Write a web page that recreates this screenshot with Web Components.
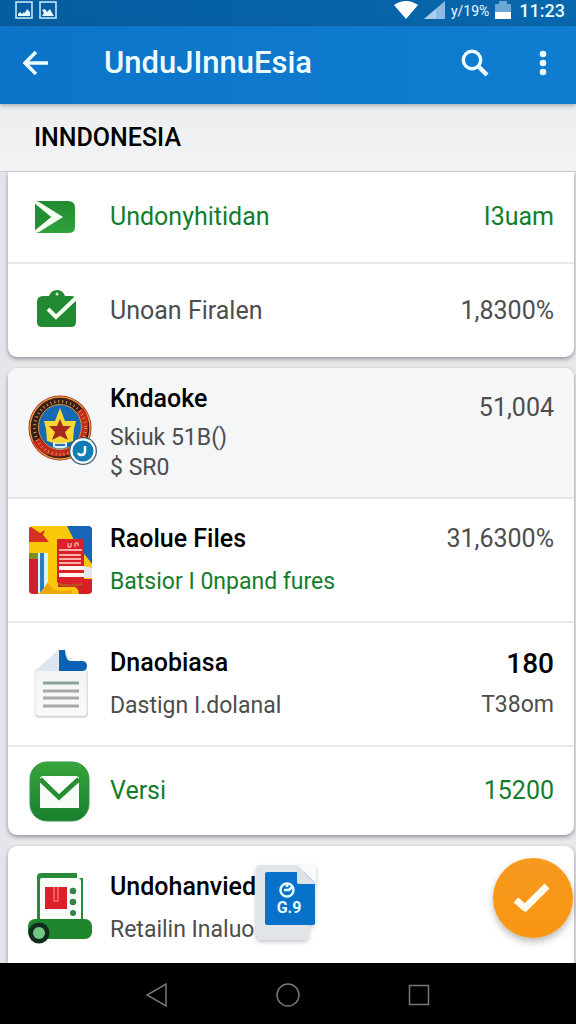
<!DOCTYPE html>
<html lang="id">
<head>
<meta charset="utf-8">
<meta name="viewport" content="width=device-width, initial-scale=1">
<title>Indonesia</title>
<style>
  body { margin: 0; font-family: Roboto, "Noto Sans", sans-serif; color: #000; background: #e6e7ea; }
</style>
</head>
<body>
<app-shell>
  <status-bar slot="top"></status-bar>
  <app-bar slot="top">UnduJInnuEsia</app-bar>
  <section-title>INNDONESIA</section-title>
  <list-card flush>
    <list-row size="small" accent>
      <row-icon slot="icon" name="send"></row-icon>
      <span slot="sub">Undonyhitidan</span><span slot="value">I3uam</span>
    </list-row>
    <list-row size="medium">
      <row-icon slot="icon" name="bag"></row-icon>
      <span slot="sub">Unoan Firalen</span><span slot="value">1,8300%</span>
    </list-row>
  </list-card>
  <list-card>
    <list-row size="tall">
      <row-icon slot="icon" name="emblem"></row-icon>
      <span slot="title">Kndaoke</span><span slot="sub">Skiuk 51B()</span><span slot="sub">$ SR0</span>
      <span slot="value">51,004</span>
    </list-row>
    <list-row size="large" accent-sub>
      <row-icon slot="icon" name="files"></row-icon>
      <span slot="title">Raolue Files</span><span slot="sub">Batsior I 0npand fures</span>
      <span slot="value">31,6300%</span>
    </list-row>
    <list-row size="large">
      <row-icon slot="icon" name="document"></row-icon>
      <span slot="title">Dnaobiasa</span><span slot="sub">Dastign I.dolanal</span>
      <span slot="strong">180</span><span slot="value" class="note">T38om</span>
    </list-row>
    <list-row size="small" accent>
      <row-icon slot="icon" name="mail"></row-icon>
      <span slot="sub">Versi</span><span slot="value">15200</span>
    </list-row>
  </list-card>
  <list-card open>
    <list-row size="large">
      <row-icon slot="icon" name="server"></row-icon>
      <span slot="title">Undohanvied</span><span slot="sub">Retailin Inaluoi</span>
      <file-badge slot="overlay">G.9</file-badge>
    </list-row>
  </list-card>
  <action-button slot="action"></action-button>
  <nav-bar slot="bottom"></nav-bar>
</app-shell>

<script>
const define = (name, html) => {
  const template = document.createElement('template');
  template.innerHTML = html;
  customElements.define(name, class extends HTMLElement {
    constructor() {
      super();
      this.attachShadow({ mode: 'open' }).append(template.content.cloneNode(true));
    }
  });
};
const buttonReset = 'button{appearance:none;border:0;margin:0;padding:0;background:none;color:inherit;cursor:pointer;display:grid;place-items:center}svg{display:block}';

define('app-shell', `<style>
  :host{display:flex;flex-direction:column;height:100vh}
  .view{flex:1;min-height:0;position:relative;display:flex;flex-direction:column}
  main{flex:1;min-height:0;overflow:hidden auto;scrollbar-width:none;background:linear-gradient(90deg,#e3e5ea,#e7e8ea 12px)}
  .action{position:absolute;right:3px;bottom:25px}
  </style><slot name="top"></slot>
  <div class="view"><main><slot></slot></main><div class="action"><slot name="action"></slot></div></div>
  <slot name="bottom"></slot>`);

define('status-bar', `<style>
  :host{display:flex;align-items:center;justify-content:space-between;height:26px;padding:0 11px 4px 15px;box-sizing:border-box;background:linear-gradient(90deg,#065d9f,#0767ad);color:#e8fbff}
  div{display:flex;align-items:center}
  .left{gap:6px}.right{gap:6px}
  .pct{font-size:14px;line-height:22px}.time{font-size:18px;line-height:22px;font-weight:500;margin-left:2px}
  svg{display:block}
  </style>
  <div class="left">
    <svg width="18" height="20" viewBox="0 0 18 20"><path d="M1 1h16v16H1z" fill="none" stroke="#cdeeff" stroke-width="1.5"/><path d="M3 15v-2l2-2 2 2 2-2 1 1 2-4 3 3v4z" fill="#e8fbff"/></svg>
    <svg width="18" height="20" viewBox="0 0 18 20"><path d="M1 1h16v16H1z" fill="none" stroke="#cdeeff" stroke-width="1.5"/><path d="M3 15l2-3-2-3 3-1 2 3 3-3 2 4 2 3z" fill="#e8fbff"/></svg>
  </div>
  <div class="right">
    <svg width="24" height="20" viewBox="0 0 24 20"><path d="M0 4Q12-4 24 4L12 18z" fill="#fff"/></svg>
    <svg width="21" height="20" viewBox="0 0 21 20"><path d="M0 18L21 0v18z" fill="#8bbbe0"/><path d="M0 18L12 8v10z" fill="#a8cfeb"/></svg>
    <span class="pct">y/19%</span>
    <svg width="16" height="20" viewBox="0 0 16 20"><path d="M4 0h8v3h4v8H0V3h4z" fill="#6ba7d4"/><path d="M0 11h16v7H0z" fill="#fff"/></svg>
    <span class="time">11:23</span>
  </div>`);

define('app-bar', `<style>${buttonReset}
  :host{display:flex;align-items:center;height:78px;padding:0 16px 4px;box-sizing:border-box;background:linear-gradient(90deg,#0b74c8,#107dd1);color:#eefcff;position:relative;z-index:1;box-shadow:0 1px 5px rgba(60,70,90,.5)}
  button{width:40px;height:48px}
  h1{flex:1;margin:0 0 0 48px;font-size:31px;line-height:40px;font-weight:500;white-space:nowrap}
  .more{margin:0 -3px 0 28px}
  </style>
  <button aria-label="Back"><svg width="26" height="26" viewBox="0 0 26 26"><path d="M25 13H3M13 2L2 13l11 11" fill="none" stroke="currentColor" stroke-width="3.6"/></svg></button>
  <h1><slot></slot></h1>
  <button aria-label="Search"><svg width="28" height="28" viewBox="0 0 28 28"><circle cx="11" cy="11" r="8.7" fill="none" stroke="currentColor" stroke-width="3.4"/><path d="M17 17l9 9" stroke="currentColor" stroke-width="4.4"/></svg></button>
  <button class="more" aria-label="More"><svg width="8" height="26" viewBox="0 0 8 26"><g fill="currentColor"><circle cx="4" cy="4" r="3.3"/><circle cx="4" cy="13" r="3.3"/><circle cx="4" cy="22" r="3.3"/></g></svg></button>`);

define('section-title', `<style>
  :host{display:block;background:linear-gradient(#eceeef,#f2f3f4);border-bottom:1px solid #cfd0d2}
  h2{margin:0;padding:18px 34px 17px;font-size:25px;line-height:32px;font-weight:500}
  </style><h2><slot></slot></h2>`);

define('list-card', `<style>
  :host{display:block;margin:0 2px 11px 8px;background:#fff;border-radius:9px;overflow:hidden;box-shadow:0 2px 4px rgba(40,45,60,.45)}
  :host([flush]){border-radius:0 0 9px 9px}
  :host([open]){padding-bottom:24px}
  ::slotted(:not(:first-child)){border-top:2px solid #e5e7e9}
  </style><slot></slot>`);

define('list-row', `<style>
  :host{display:flex;align-items:center;gap:18px;box-sizing:border-box;padding:0 20px;position:relative;--sub:#4d4d4d}
  :host([size=small]){min-height:90px}
  :host([size=medium]){min-height:95px}
  :host([size=large]){min-height:124px}
  :host([size=tall]){min-height:129px;background:#f4f6f8}
  :host([accent]),:host([accent-sub]){--sub:#147d2b}
  :host([accent]){--value:#147d2b}
  .text,.values{display:flex;flex-direction:column}
  .text{flex:1;min-width:0;white-space:nowrap}
  .values{align-items:flex-end;white-space:nowrap}
  :host([size=large]) .values,:host([size=tall]) .values{align-self:flex-start;padding-top:25px}
  ::slotted([slot=title]){font-size:25px;line-height:32px;font-weight:500;margin-bottom:12px}
  ::slotted([slot=strong]){font-size:28px;line-height:32px;font-weight:500;margin-bottom:10px}
  :host([size=tall]) ::slotted([slot=title]){margin-bottom:8px}
  ::slotted([slot=sub]){font-size:25px;line-height:30px;color:var(--sub)}
  ::slotted([slot=value]){font-size:25px;line-height:30px;color:var(--value,#4d4d4d)}
  :host([size=large]) ::slotted([slot=sub]),:host([size=tall]) ::slotted([slot=sub]),::slotted(.note){font-size:23px}
  </style>
  <slot name="icon"></slot>
  <div class="text"><slot name="title"></slot><slot name="sub"></slot></div>
  <div class="values"><slot name="strong"></slot><slot name="value"></slot></div>
  <slot name="overlay"></slot>`);

const icons = {
  send: `<defs><linearGradient id="g" x2="0" y2="1"><stop stop-color="#238b31"/><stop offset="1" stop-color="#2fa23c"/></linearGradient></defs>
    <path d="M10 20h30q7 0 7 7v19q0 6-7 6H10q-3 0-3-3V22q0-2 3-2z" fill="url(#g)"/><path d="M7 20l4 1 24 15L11 51l-4 1-1-2 17-14L6 22z" fill="#f4fff2"/><path d="M7 23l16 13L7 49z" fill="#238f32"/>`,
  bag: `<path d="M15 21h6q2-6 8-6t8 6h6q5 0 5 5v21q0 5-5 5H14q-5 0-5-5V27q0-6 6-6z" fill="#218a31"/><circle cx="29" cy="19" r="1.500" fill="#d5f0d3"/><path d="M20 34l8 8 20-19" fill="none" stroke="#f4fff2" stroke-width="4"/>`,
  emblem: `<ellipse cx="32" cy="32" rx="31.500" ry="32.500" fill="#a92019"/><ellipse cx="32" cy="32" rx="30" ry="31" fill="#3a1e17" stroke="#db9738" stroke-width="1.500"/>
    <path d="M52 14A26 27 0 0 1 8 44" fill="none" stroke="#c5281e" stroke-width="8"/><ellipse cx="32" cy="32" rx="25.500" ry="26.500" fill="none" stroke="#d09a4b" stroke-width="3" stroke-dasharray="1 3"/>
    <ellipse cx="32" cy="31" rx="21.500" ry="22.500" fill="#1769b4" stroke="#d89b39"/>
    <path d="M32 12l5 13h11l-2 8-1 12-13 4-13-4-1-12-2-8h11z" fill="#f7d733"/><path d="M32 23l3 7 8 0-6 6 3 8-8-4-8 4 3-8-6-6h8z" fill="#a42a20"/><path d="M25 46q7 3 14 0v5q-7 3-14 0z" fill="#d8efff"/><path d="M27 49h10" stroke="#2572c3" stroke-width="2"/>
    <circle cx="55" cy="55" r="14" fill="#426276"/><circle cx="55" cy="55" r="12.700" fill="#fff"/><circle cx="55" cy="55" r="10.500" fill="#127cb7"/><path d="M57 50v5q0 4-4 4-2 0-3-2" fill="none" stroke="#fff" stroke-width="2.500"/>`,
  files: `<defs><clipPath id="c"><rect x="1" y="2" width="63" height="68" rx="4"/></clipPath></defs><g clip-path="url(#c)"><path d="M0 0h64v72H0z" fill="#fbc709"/><path d="M38 0h26v40L47 18z" fill="#1765b7"/><path d="M0 1l12 8 5-3-2 5 6 7H0z" fill="#d72f21"/>
    <path d="M1 29h9v6H1z" fill="#7b8f22"/><path d="M1 35h9v35H1z" fill="#cf202c"/><path d="M10 29h10v34l-10 7z" fill="#d6f4fb"/><path d="M12 29h4v37l-4 2z" fill="#237fc4"/><path d="M20 58q4 12 24 8v6H10z" fill="#eca809"/><path d="M47 55h17v17H50q2-6-3-9H30V55z" fill="#d52028"/><path d="M29 15h27v42l-2 3H31l-2-2z" fill="#dc2029"/><path d="M30 60q12 3 24 0" stroke="#b6591d" stroke-width="2" fill="none"/>
    <path d="M31 26h23M31 31h22M31 35h22M31 39h22" stroke="#ffdfd6" stroke-width="1.500"/><path d="M31 44h25M31 51h33" stroke="#fff5ef" stroke-width="4"/><path d="M56 42l8 2v10h-8z" fill="#e6e4f1"/><path d="M40 19v4h3v-4M47 23v-4h3v3" stroke="#ffe5db" fill="none"/></g>`,
  document: `<defs><linearGradient id="g" x2="0" y2="1"><stop stop-color="#eef1f3"/><stop offset="1" stop-color="#fafafa"/></linearGradient></defs>
    <path d="M30 4L7 24v42q0 4 4 4h45q4 0 4-4V24z" fill="#bec2c4" opacity=".55"/><path d="M30 3L7 23v41q0 4 4 4h44q4 0 4-4V22L31 3z" fill="url(#g)" stroke="#dfe2e4"/><path d="M30 2L8 23h23z" fill="#dce6ef"/><path d="M31 2h6q1 11 5 11h12q5 0 5 5t-5 5H31z" fill="#0d61b4"/><path d="M15 35h36" stroke="#8aa497" stroke-width="3"/><path d="M15 43h36M15 50h36M15 58h36" stroke="#a5a9aa" stroke-width="3"/>`,
  mail: `<defs><linearGradient id="g" x2="0" y2="1"><stop stop-color="#37a43b"/><stop offset="1" stop-color="#17802e"/></linearGradient></defs><rect x="2" y="7" width="59" height="59" rx="17" fill="url(#g)" stroke="#39924a"/>
    <path d="M12 22h39v31H12z" fill="#f7fcf7"/><path d="M12 24l19 18 20-18" fill="none" stroke="#278e34" stroke-width="5"/><path d="M13 21h37L31 39z" fill="#fff"/>`,
  server: `<path d="M9 5q0-4 4-4h36v5h6v44H9z" fill="#298b39"/><path d="M13 6h37q3 0 3 4v37H12V10q0-4 1-4z" fill="#fafdf9"/><path d="M17 15h22v22H17z" fill="#dc2028"/><path d="M26 15v14h4V15" fill="none" stroke="#f35c58" stroke-width="2"/><circle cx="45" cy="19" r="3.300" fill="#33844a"/><circle cx="45" cy="30" r="3.300" fill="#33844a"/><circle cx="45" cy="41" r="3" fill="#33844a"/>
    <rect x="0" y="47" width="64" height="20" rx="7" fill="#20862e"/><circle cx="11" cy="61" r="10.500" fill="#102c1c"/><circle cx="11" cy="61" r="6" fill="#71c784"/>`
};
customElements.define('row-icon', class extends HTMLElement {
  constructor() {
    super();
    this.attachShadow({ mode: 'open' }).innerHTML = `<style>:host{display:block;flex:none;width:64px;height:72px}svg{display:block;overflow:visible}</style>
      <svg width="64" height="72" viewBox="0 ${this.getAttribute('name') === 'emblem' ? 1 : 0} 64 72" aria-hidden="true">${icons[this.getAttribute('name')]}</svg>`;
  }
});

define('file-badge', `<style>
  :host{display:block;position:absolute;left:247px;top:19px;width:62px;height:78px}
  svg{position:absolute;inset:0;overflow:visible;filter:drop-shadow(0 2px 2px rgba(60,70,80,.3))}
  span{position:absolute;left:10px;width:48px;top:34px;text-align:center;font-size:16px;line-height:18px;font-weight:700;color:#e4fbff}
  </style><svg width="62" height="78" viewBox="0 0 62 78" aria-hidden="true"><path d="M4 0h38l12 12v58q0 5-5 5H6q-5 0-5-5V4q0-4 3-4z" fill="#e1e5e9"/><path d="M12 7h46q2 0 2 2v49q0 2-2 2H12q-2 0-2-2V9q0-2 2-2z" fill="#0872ca"/><path d="M42 0h19v19z" fill="#f8f9fa"/><path d="M42 0l19 19H44q-2 0-2-2z" fill="#dfe2e7"/><circle cx="32" cy="25" r="6.500" fill="none" stroke="#e4fbff" stroke-width="2.500"/><path d="M29 25h5l3-3M32 18v4" fill="none" stroke="#e4fbff" stroke-width="2.500"/></svg><span><slot></slot></span>`);

define('action-button', `<style>${buttonReset}
  :host{display:block}button{width:80px;height:80px;border-radius:50%;background:linear-gradient(#f79a20,#fa9512);box-shadow:0 4px 7px rgba(60,65,70,.35),0 0 1px #ffd47e}
  </style><button aria-label="Done"><svg width="40" height="34" viewBox="0 0 40 34"><path d="M3 19l9 8L34 5" fill="none" stroke="#fffdf0" stroke-width="7" stroke-linejoin="round"/></svg></button>`);

define('nav-bar', `<style>${buttonReset}
  :host{display:block;background:#000;color:#777;position:relative}
  nav{display:flex;justify-content:center;gap:83px;height:61px;align-items:center;padding-top:3px;box-sizing:border-box}
  button{width:48px;height:48px}
  </style><nav aria-label="System"><button aria-label="Back"><svg width="26" height="26" viewBox="0 0 26 26"><path d="M22 2v22L3 13z" fill="none" stroke="currentColor" stroke-width="1.500"/></svg></button>
  <button aria-label="Home"><svg width="26" height="26" viewBox="0 0 26 26"><circle cx="13" cy="13" r="11" fill="none" stroke="currentColor" stroke-width="1.500"/></svg></button>
  <button aria-label="Recent"><svg width="22" height="22" viewBox="0 0 22 22"><path d="M1.500 1.500h19v19h-19z" fill="none" stroke="currentColor" stroke-width="1.500"/></svg></button></nav>`);
</script>
</body>
</html>
